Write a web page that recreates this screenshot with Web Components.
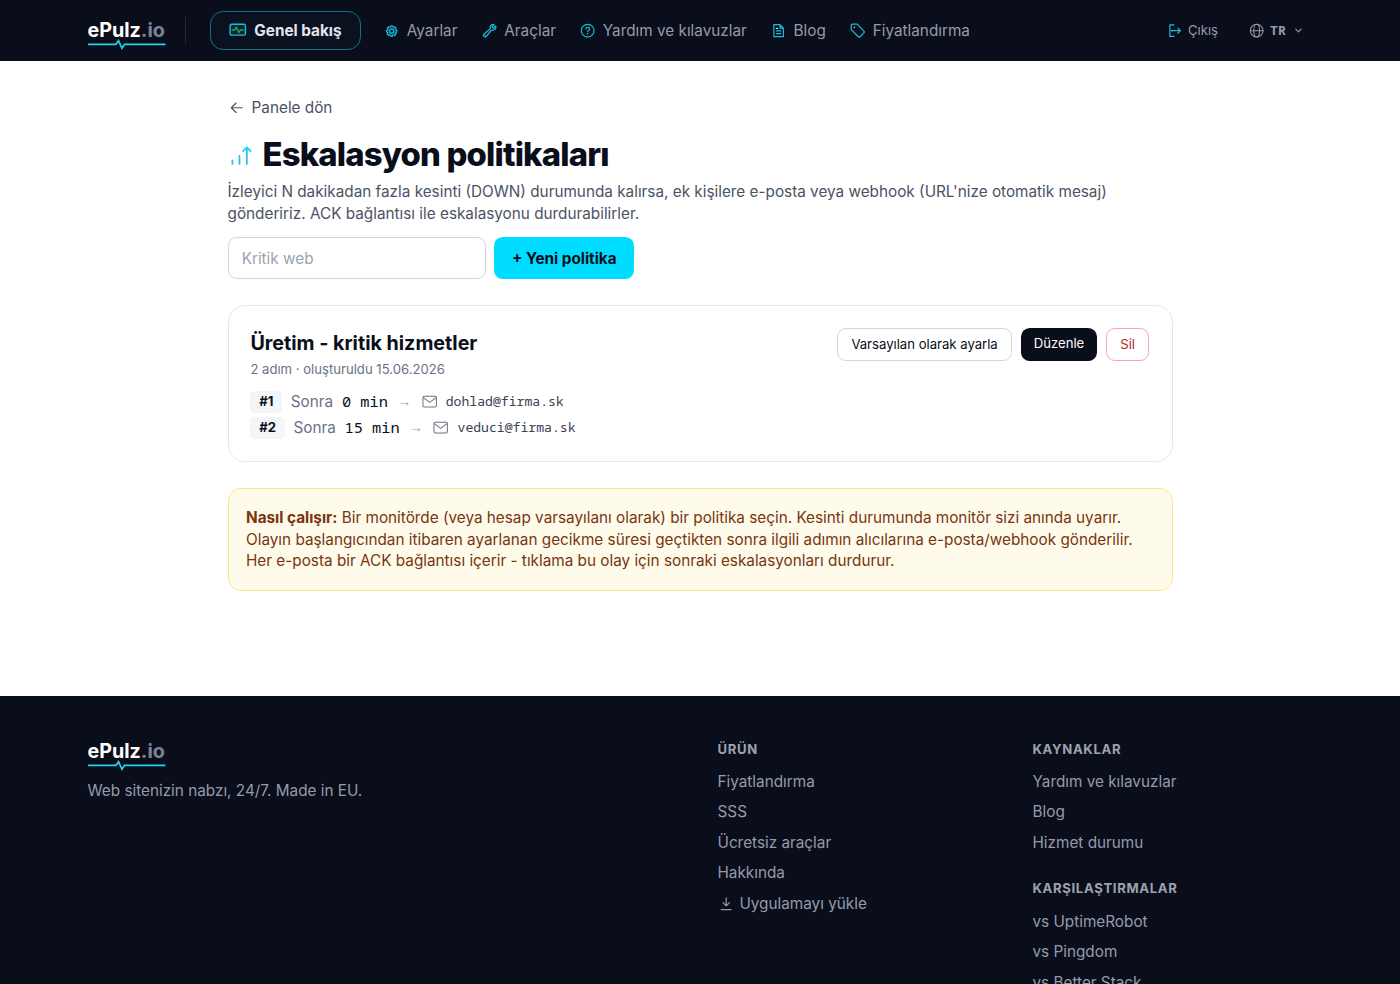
<!DOCTYPE html>
<html lang="tr">
<head>
<meta charset="utf-8">
<title>Eskalasyon politikaları - ePulz.io</title>
<style>
    html {
        font-size: 17.5px;
        --ink: #0a0e1a;
        --cyan: #00dcff;
        --mono: 'Noto Sans Mono', 'DejaVu Sans Mono', monospace;
    }
    body {
        margin: 0;
        height: 984px;
        overflow: hidden;
        background: #fff;
        color: var(--ink);
        font: 0.875rem/1.25rem Inter, 'Noto Sans', sans-serif;
    }
</style>
</head>
<body>
<ep-header></ep-header>
<ep-main>
    <ep-back>Panele dön</ep-back>
    <ep-title>Eskalasyon politikaları</ep-title>
    <ep-lead>İzleyici N dakikadan fazla kesinti (DOWN) durumunda kalırsa, ek kişilere e-posta veya webhook (URL'nize otomatik mesaj) göndeririz. ACK bağlantısı ile eskalasyonu durdurabilirler.</ep-lead>
    <ep-create placeholder="Kritik web">+ Yeni politika</ep-create>
    <ep-policy>
        <span slot="name">Üretim - kritik hizmetler</span>
        <span slot="meta">2 adım · oluşturuldu 15.06.2026</span>
        <ep-button slot="actions">Varsayılan olarak ayarla</ep-button>
        <ep-button slot="actions" kind="dark">Düzenle</ep-button>
        <ep-button slot="actions" kind="danger">Sil</ep-button>
        <ep-step n="#1" delay="0 min">dohlad@firma.sk</ep-step>
        <ep-step n="#2" delay="15 min">veduci@firma.sk</ep-step>
    </ep-policy>
    <ep-note><b>Nasıl çalışır:</b> Bir monitörde (veya hesap varsayılanı olarak) bir politika seçin. Kesinti durumunda monitör sizi anında uyarır. Olayın başlangıcından itibaren ayarlanan gecikme süresi geçtikten sonra ilgili adımın alıcılarına e-posta/webhook gönderilir. Her e-posta bir ACK bağlantısı içerir - tıklama bu olay için sonraki eskalasyonları durdurur.</ep-note>
</ep-main>
<ep-footer></ep-footer>

<script>
const icons = {
    monitor: '<rect x="1.5" y="3" width="21" height="15" rx="2" fill="#0b2630"/><path stroke="#25a768" d="M4.5 11h3.5l2-4 3.5 7.5 2-3.5h4"/>',
    gear: '<path fill="#0c4250" d="m10.3 4.3.5-1.3h2.4l.5 1.3 1.9.8 1.4-.6 1.7 1.7-.6 1.4.8 1.9 1.3.5v2.4l-1.3.5-.8 1.9.6 1.4-1.7 1.7-1.4-.6-1.9.8-.5 1.3h-2.4l-.5-1.3-1.9-.8-1.4.6-1.7-1.7.6-1.4-.8-1.9-1.3-.5V10l1.3-.5.8-1.9-.6-1.400L7 4.500l1.400.600z"/><circle cx="12" cy="11.200" r="3.200" fill="#0a0e1a"/>',
    wrench: '<path d="M21.750 6.750a4.500 4.500 0 0 1-4.884 4.484c-1.076-.091-2.264.071-2.950.904l-7.152 8.684a2.548 2.548 0 1 1-3.586-3.586l8.684-7.152c.833-.686.995-1.874.904-2.950a4.500 4.500 0 0 1 6.336-4.486l-3.276 3.276a3.004 3.004 0 0 0 2.250 2.250l3.276-3.276c.256.565.398 1.192.398 1.852Z"/><path d="M4.900 19.100h.01"/>',
    help: '<circle cx="12" cy="12" r="10"/><path d="M9.200 9.400c.3-3.500 5.900-3.300 5.900 0 0 2.200-3.100 2.200-3.100 4.300"/><path stroke="#e5e7eb" d="M12 17h.01"/>',
    doc: '<path d="M4.500 2.500h9.500l5.500 5.500v13.500h-15zM14 3v5h5M8.500 12.500h7M8.500 16.500h7"/><path stroke="#cbd5e1" d="M8.500 8.500h2"/>',
    tag: '<path d="M2 3.500v6.800L13 21.500c.8.800 2 .8 2.800 0l6-6c.8-.8.8-2 0-2.800L11.200 1.800H3.700C2.700 1.800 2 2.500 2 3.500Z"/><path stroke="#e5e7eb" stroke-width="2.500" d="M6.800 6.700h.01"/>',
    exit: '<path d="M11 3H4.500v18H11M9 12h12M17 8l4 4-4 4"/><path stroke="#e5e7eb" d="M7.500 12h.5"/>',
    globe: '<circle cx="12" cy="12" r="10"/><ellipse cx="12" cy="12" rx="4.500" ry="10"/><path d="M2 12h20"/>',
    chevron: '<path d="m6 9 6 6 6-6"/>',
    back: '<path d="M19.500 12h-15M11 18.500l-6.500-6.500 6.500-6.500"/>',
    steps: '<path d="M4 20v-3.300M10.500 20v-7.300M17.200 20V5.200"/><path stroke="#00dcff" d="m13.800 8.300 3.400-3.400 3.400 3.400"/>',
    mail: '<rect x="1.500" y="3.500" width="21" height="17" rx="2"/><path d="m2.500 6 9.500 7L21.500 6"/>',
    download: '<path d="M11.300 4v10.500M7 10.500l4.300 4.300 4.300-4.300M4.500 20h13.500"/>',
}

// small helper: every element below is a style block plus markup
const define = (name, css, html) =>
    customElements.define(
        name,
        class extends HTMLElement {
            constructor() {
                super()
                this.attachShadow({ mode: 'open' })
            }
            connectedCallback() {
                this.shadowRoot.innerHTML = `
                    <style>* { box-sizing: border-box; } ${css}</style>
                    ${typeof html === 'function' ? html(this) : html}
                `
            }
        }
    )

define('ep-icon', `
    :host { display: block; flex: none; width: 1rem; height: 1rem; }
    svg { display: block; width: 100%; height: 100%; overflow: visible; }
`, (el) => `
    <svg viewBox="0 0 24 24" fill="none" stroke="currentColor" stroke-linecap="round" stroke-linejoin="round"
        stroke-width="${el.getAttribute('weight') || 1.9}">${icons[el.getAttribute('name')]}</svg>
`)

define('ep-logo', `
    :host { display: block; width: 4.43rem; padding-top: 1.5px; color: #fff; }
    .word { font-size: 1.125rem; line-height: 1.25rem; font-weight: 700; white-space: nowrap; }
    .word span { color: #7c839b; }
    svg { display: block; width: 100%; height: 0.5rem; margin-top: -0.11rem; overflow: visible; }
`, `
    <div class="word">ePulz<span>.io</span></div>
    <svg viewBox="0 0 77.500 8.750" fill="none" stroke="#22d3ee" stroke-width="1.700"><path d="M0 4.300h28l2.500-3.500 3.500 7.500 2.500-4h41"/></svg>
`)

define('ep-nav-link', `
    :host { display: flex; align-items: center; gap: 0.4rem; color: #949bad; white-space: nowrap; }
    ep-icon { width: 0.875rem; height: 0.875rem; margin-top: 1px; color: #16bfdb; }
    :host([active]) {
        height: 2.25rem; padding: 0 1.05rem; gap: 0.44rem; color: #e2e5ee; font-weight: 700;
        border: 1px solid #12718a; border-radius: 0.75rem; background: #0a121f;
    }
    :host([active]) ep-icon { width: 1rem; height: 1rem; margin-top: 0; }
    :host([small]) { font-size: 0.75rem; gap: 0.35rem; }
    :host([small]) ep-icon { margin-top: 0; }
    :host([name=gear]) { margin-left: -1px; }
    :host([name=gear]) ep-icon { margin-top: 2px; }
`, (el) => `<ep-icon name="${el.getAttribute('name')}"></ep-icon><slot></slot>`)

define('ep-header', `
    :host { display: block; background: var(--ink); height: 61px; }
    .bar { display: flex; align-items: center; width: 70rem; height: 100%; margin: 0 auto; }
    ep-logo { margin-top: 0.32rem; }
    .rule { width: 1px; height: 1.5rem; margin: 0 1.375rem 0 1.125rem; background: #262b3a; }
    nav { display: flex; align-items: center; gap: 1.4rem; }
    .end { display: flex; align-items: center; margin-left: auto; color: #949bad; }
    .lang { display: flex; align-items: center; gap: 0.35rem; padding: 0 0.5rem 0 1.75rem; }
    .lang b { font: 700 0.75rem/1rem var(--mono); }
    .lang ep-icon { width: 0.875rem; height: 0.875rem; }
    .lang ep-icon:last-child { width: 0.625rem; height: 0.625rem; margin-left: 0.05rem; }
`, `
    <div class="bar">
        <ep-logo></ep-logo>
        <div class="rule"></div>
        <nav>
            <ep-nav-link name="monitor" active>Genel bakış</ep-nav-link>
            <ep-nav-link name="gear">Ayarlar</ep-nav-link>
            <ep-nav-link name="wrench">Araçlar</ep-nav-link>
            <ep-nav-link name="help">Yardım ve kılavuzlar</ep-nav-link>
            <ep-nav-link name="doc">Blog</ep-nav-link>
            <ep-nav-link name="tag">Fiyatlandırma</ep-nav-link>
        </nav>
        <div class="end">
            <ep-nav-link name="exit" small>Çıkış</ep-nav-link>
            <div class="lang"><ep-icon name="globe" weight="1.600"></ep-icon><b>TR</b><ep-icon name="chevron" weight="2.500"></ep-icon></div>
        </div>
    </div>
`)

define('ep-main', `
    :host { display: block; width: 54rem; margin: 0 auto; padding: 2.05rem 0 2rem; }
`, '<slot></slot>')

define('ep-back', `
    :host { display: flex; align-items: center; gap: 0.375rem; color: #4b5265; }
`, '<ep-icon name="back" weight="1.600"></ep-icon><slot></slot>')

define('ep-title', `
    :host { display: block; margin-top: 0.95rem; }
    h1 {
        display: flex; align-items: center; gap: 0.5rem; margin: 0;
        font-size: 1.875rem; line-height: 2.25rem; font-weight: 800; letter-spacing: -0.025em;
    }
    ep-icon { width: 1.5rem; height: 1.5rem; color: #22c3e6; }
`, '<h1><ep-icon name="steps" weight="1.600"></ep-icon><slot></slot></h1>')

define('ep-lead', `
    :host { display: block; margin-top: 0.34rem; color: #4b5265; }
`, '<slot></slot>')

define('ep-create', `
    :host { display: flex; gap: 0.5rem; margin-top: 0.72rem; }
    input, button { height: 2.375rem; font: inherit; border-radius: 0.5rem; }
    input { width: 14.750rem; padding: 1px 0.75rem 0; border: 1px solid #d1d5db; background: #fff; outline: 0; }
    input::placeholder { color: #9ca3af; opacity: 1; }
    button { padding: 2px 1rem 0; border: 0; background: var(--cyan); color: var(--ink); font-weight: 700; }
`, (el) => `
    <input placeholder="${el.getAttribute('placeholder')}">
    <button><slot></slot></button>
`)

define('ep-button', `
    :host { display: flex; }
    button {
        height: 1.875rem; padding: 1px 0.75rem 0; border: 1px solid #d1d5e0; border-radius: 0.5rem;
        background: #fff; color: var(--ink); font: 0.75rem/1rem Inter, sans-serif; white-space: nowrap;
    }
    :host([kind=dark]) button { border: 0; background: var(--ink); color: #fff; padding-bottom: 1px; }
    :host([kind=danger]) button { border-color: #fca5a5; color: #b91c1c; }
`, '<button><slot></slot></button>')

define('ep-policy', `
    :host {
        display: block; box-sizing: border-box; margin-top: 1.5rem; padding: 1.25rem;
        border: 1px solid #e5e7eb; border-radius: 1rem;
    }
    .top { display: flex; justify-content: space-between; align-items: flex-start; }
    h2 { margin: 0; font-size: 1.125rem; line-height: 1.750rem; font-weight: 700; }
    p { margin: 0.15rem 0 0; font-size: 0.75rem; line-height: 1rem; color: #6b7286; }
    .actions { display: flex; gap: 0.5rem; margin-right: 0.03rem; }
    .steps { display: grid; gap: 0.25rem; margin-top: 0.71rem; }
`, `
    <div class="top">
        <div>
            <h2><slot name="name"></slot></h2>
            <p><slot name="meta"></slot></p>
        </div>
        <div class="actions"><slot name="actions"></slot></div>
    </div>
    <div class="steps"><slot></slot></div>
`)

define('ep-step', `
    :host { display: flex; align-items: center; gap: 0.5rem; height: 1.25rem; color: #6b7286; }
    .n {
        padding: 0.125rem 0.5rem; border-radius: 0.25rem; background: #f3f5f9; color: var(--ink);
        font-size: 0.75rem; line-height: 1rem; font-weight: 700;
    }
    .delay { font-family: var(--mono); color: var(--ink); }
    .arrow { width: 0.875rem; text-align: center; color: #9ca3af; font: 0.8rem/1rem 'Liberation Sans', sans-serif; }
    .to { display: flex; align-items: center; gap: 0.5rem; font-size: 0.75rem; }
    .to ep-icon { width: 0.875rem; height: 0.875rem; margin-left: 0.06rem; }
    .to span { font-family: var(--mono); color: #374151; }
`, (el) => `
    <span class="n">${el.getAttribute('n')}</span>
    <span>Sonra</span>
    <span class="delay">${el.getAttribute('delay')}</span>
    <span class="arrow">→</span>
    <span class="to"><ep-icon name="mail" weight="1.600"></ep-icon><span><slot></slot></span></span>
`)

define('ep-note', `
    :host {
        display: block; box-sizing: border-box; margin-top: 1.5rem; padding: 1rem;
        border: 1px solid #fde68a; border-radius: 0.75rem; background: #fffbeb; color: #78350f;
    }
    ::slotted(b) { font-weight: 700; }
`, '<slot></slot>')

define('ep-links', `
    :host { display: block; }
    h3 { margin: 1px 0 0; font-size: 0.75rem; line-height: 1rem; font-weight: 700; letter-spacing: 0.05em; color: #9ca3af; }
    div { display: grid; gap: 0.5rem; margin-top: 0.72rem; }
    ::slotted(span) { display: flex; align-items: center; gap: 0.25rem; }
`, (el) => `<h3>${el.getAttribute('heading')}</h3><div><slot></slot></div>`)

define('ep-footer', `
    :host { display: block; margin-top: 4rem; padding: 2.500rem 0; background: var(--ink); color: #949bad; }
    .grid { display: grid; grid-template-columns: 34rem 16rem 16rem; column-gap: 2rem; width: 70rem; margin: 0 auto; }
    p { margin: 0.6rem 0 0; }
    .col { display: grid; gap: 1.470rem; align-content: start; }
`, `
    <div class="grid">
        <div><ep-logo></ep-logo><p>Web sitenizin nabzı, 24/7. Made in EU.</p></div>
        <div class="col">
            <ep-links heading="ÜRÜN">
                <span>Fiyatlandırma</span>
                <span>SSS</span>
                <span>Ücretsiz araçlar</span>
                <span>Hakkında</span>
                <span><ep-icon name="download" weight="1.600"></ep-icon>Uygulamayı yükle</span>
            </ep-links>
        </div>
        <div class="col">
            <ep-links heading="KAYNAKLAR">
                <span>Yardım ve kılavuzlar</span>
                <span>Blog</span>
                <span>Hizmet durumu</span>
            </ep-links>
            <ep-links heading="KARŞILAŞTIRMALAR">
                <span>vs UptimeRobot</span>
                <span>vs Pingdom</span>
                <span>vs Better Stack</span>
            </ep-links>
        </div>
    </div>
`)
</script>
</body>
</html>
